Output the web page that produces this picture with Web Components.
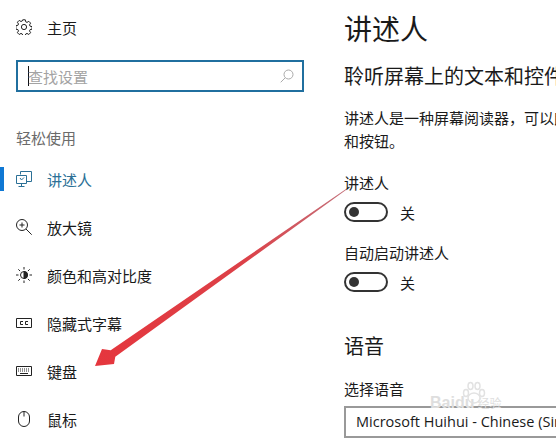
<!DOCTYPE html>
<html lang="zh">
<head>
<meta charset="utf-8">
<title>讲述人</title>
<style>
  html, body { margin: 0; height: 100%; background: #fff; overflow: hidden; }
  body { font-family: "Noto Sans CJK SC", "Liberation Sans", sans-serif; color: #1a1a1a; }
</style>
</head>
<body>
<settings-app>
  <nav-pane slot="nav">
    <nav-item slot="home" home>
      <svg slot="icon" viewBox="0 0 16 16" width="16" height="16" fill="none" stroke="#222" stroke-width="1"><circle cx="8" cy="8" r="2.6"/><path d="M6.700 .8h2.600l.4 2 1.300.6 1.800-1.100 1.800 1.800-1.100 1.800.6 1.300 2 .4v2.600l-2 .4-.6 1.300 1.100 1.800-1.800 1.800-1.800-1.100-1.300.6-.4 2H6.700l-.4-2-1.300-.6-1.800 1.100-1.800-1.800 1.100-1.800-.6-1.300-2-.4V6.700l2-.4.6-1.300-1.100-1.800 1.800-1.800 1.800 1.100 1.300-.6z"/></svg>
      主页
    </nav-item>
    <search-box slot="search" placeholder="查找设置"></search-box>
    <span slot="group">轻松使用</span>
    <nav-item active>
      <svg slot="icon" viewBox="0 0 16 16" width="16" height="16" fill="none" stroke="#2b7096" stroke-width="1"><path d="M4.500 3.500V.5h11v10h-5"/><path d="M.5 4.500h10v8H.5z"/><path d="M5.500 12.500v3M2.500 15.500h6"/><path d="M4 7l1.500 2L8 6.500"/></svg>
      讲述人
    </nav-item>
    <nav-item>
      <svg slot="icon" viewBox="0 0 16 16" width="16" height="16" fill="none" stroke="#222" stroke-width="1"><circle cx="6" cy="6" r="5.500"/><path d="M10 10l5.700 5.700M3.500 6h5M6 3.500v5"/></svg>
      放大镜
    </nav-item>
    <nav-item>
      <svg slot="icon" viewBox="0 0 16 16" width="16" height="16" fill="none" stroke="#222" stroke-width="1"><circle cx="8" cy="8" r="3.500"/><path d="M8 4.500a3.500 3.500 0 0 1 0 7z" fill="#222"/><path d="M8 0v2.500M8 13.500V16M0 8h2.500M13.500 8H16M2.300 2.300l1.800 1.800M11.900 11.900l1.800 1.800M2.300 13.700l1.800-1.800M11.900 4.100l1.800-1.800"/></svg>
      颜色和高对比度
    </nav-item>
    <nav-item>
      <svg slot="icon" viewBox="0 0 16 16" width="16" height="16" fill="none" stroke="#222" stroke-width="1"><path d="M.5 3.500h15v9H.5z"/><path d="M7 6.500H4.500v3H7M12 6.500H9.500v3H12"/></svg>
      隐藏式字幕
    </nav-item>
    <nav-item>
      <svg slot="icon" viewBox="0 0 16 16" width="16" height="16" fill="none" stroke="#222" stroke-width="1"><path d="M.5 3.500h15v9H.5z"/><path d="M2 6h12M2 8h12" stroke-dasharray="1 1"/><path d="M4 10.500h8"/></svg>
      键盘
    </nav-item>
    <nav-item>
      <svg slot="icon" viewBox="0 0 16 16" width="16" height="16" fill="none" stroke="#222" stroke-width="1"><rect x="2.500" y=".5" width="11" height="15" rx="5.500"/><path d="M8 .5v5"/></svg>
      鼠标
    </nav-item>
  </nav-pane>

  <narrator-page slot="main"></narrator-page>

  <arrow-mark slot="overlay"></arrow-mark>
  <water-mark slot="overlay"></water-mark>
</settings-app>

<script>
/**
 * Outer frame: the navigation column, the page and what lies over them.
 */
customElements.define('settings-app',
  class extends HTMLElement {
    constructor () {
      super()
      this.attachShadow({ mode: 'open' }).innerHTML = `
        <style>
          :host { display: grid; grid-template-columns: 344px 1fr; width: 556px; height: 441px; position: relative; overflow: hidden; }
        </style>
        <slot name="nav"></slot>
        <slot name="main"></slot>
        <slot name="overlay"></slot>
      `
    }
  }
)

/**
 * Left column.
 */
customElements.define('nav-pane',
  class extends HTMLElement {
    constructor () {
      super()
      this.attachShadow({ mode: 'open' }).innerHTML = `
        <style>
          :host { display: block; }
          #group { display: block; height: 20px; line-height: 20px; margin: 36px 0 0 16px; font-size: 15px; color: #6b6b6b; }
          #list { display: block; margin-top: 7px; }
          .search { display: block; margin: 8px 0 0 16px; }
        </style>
        <slot name="home"></slot>
        <div class="search"><slot name="search"></slot></div>
        <div id="group"><slot name="group"></slot></div>
        <div id="list"><slot></slot></div>
      `
    }
  }
)

/**
 * One row of the navigation, icon by way of a slot.
 */
customElements.define('nav-item',
  class extends HTMLElement {
    constructor () {
      super()
      this.attachShadow({ mode: 'open' }).innerHTML = `
        <style>
          :host { display: flex; align-items: center; height: 48px; position: relative; font-size: 15px; color: #1a1a1a; padding-left: 16px; }
          :host([home]) { height: 52px; padding-top: 2px; box-sizing: border-box; }
          :host([active]) { color: #2b7096; }
          :host([active])::before { content: ""; position: absolute; left: 0; top: 12px; width: 4px; height: 24px; background: #0f78d4; }
          .icon { display: flex; width: 16px; height: 16px; margin-right: 15px; }
        </style>
        <span class="icon"><slot name="icon"></slot></span>
        <slot></slot>
      `
    }
  }
)

/**
 * Search field with focus border and caret.
 */
customElements.define('search-box',
  class extends HTMLElement {
    constructor () {
      super()
      this.attachShadow({ mode: 'open' }).innerHTML = `
        <style>
          :host { display: flex; align-items: center; box-sizing: border-box; width: 288px; height: 32px; border: 2px solid #206f9f; padding: 0 8px 0 10px; font-size: 15px; color: #a3a3a3; }
          #caret { width: 1px; height: 20px; background: #111; margin-right: -1px; }
          #text { flex: 1; }
        </style>
        <span id="caret"></span>
        <span id="text"></span>
        <svg viewBox="0 0 14 14" width="14" height="14" fill="none" stroke="#aaa" stroke-width="1"><circle cx="8.500" cy="5.500" r="4.500"/><path d="M5.200 8.800L.7 13.300"/></svg>
      `
      this.shadowRoot.getElementById('text').textContent = this.getAttribute('placeholder')
    }
  }
)

/**
 * Switch with its caption.
 */
customElements.define('toggle-row',
  class extends HTMLElement {
    constructor () {
      super()
      this.attachShadow({ mode: 'open' }).innerHTML = `
        <style>
          :host { display: block; font-size: 15px; }
          #label { display: block; height: 20px; line-height: 20px; }
          #row { display: flex; align-items: center; height: 20px; margin-top: 9px; gap: 12px; }
          #track { display: flex; align-items: center; box-sizing: border-box; width: 44px; height: 20px; border: 2px solid #333; border-radius: 10px; padding-left: 3px; }
          #knob { width: 10px; height: 10px; border-radius: 50%; background: #333; }
        </style>
        <span id="label"><slot></slot></span>
        <div id="row"><span id="track"><span id="knob"></span></span><span>关</span></div>
      `
    }
  }
)

/**
 * Right column.
 */
customElements.define('narrator-page',
  class extends HTMLElement {
    constructor () {
      super()
      this.attachShadow({ mode: 'open' }).innerHTML = `
        <style>
          :host { display: block; white-space: nowrap; overflow: hidden; }
          h1 { font-size: 28px; font-weight: 400; line-height: 40px; margin: 8px 0 0; }
          h2 { font-size: 20px; font-weight: 400; line-height: 28px; margin: 14px 0 0; }
          p { font-size: 15px; line-height: 23px; margin: 16px 0 0; }
          toggle-row { margin-top: 21px; }
          .lang { margin-top: 40px; }
          label { display: block; font-size: 15px; line-height: 20px; margin-top: 19px; }
          #select { box-sizing: border-box; width: 240px; height: 32px; margin-top: 7px; border: 2px solid #999; padding-left: 10px; font: 14.5px/28px "Open Sans", "Noto Sans", sans-serif; overflow: hidden; }
        </style>
        <h1>讲述人</h1>
        <h2>聆听屏幕上的文本和控件</h2>
        <p>讲述人是一种屏幕阅读器，可以朗读屏幕上的所有元素，如文本<br>和按钮。</p>
        <toggle-row>讲述人</toggle-row>
        <toggle-row>自动启动讲述人</toggle-row>
        <h2 class="lang">语音</h2>
        <label>选择语音</label>
        <div id="select">Microsoft Huihui - Chinese (Simplified)</div>
      `
    }
  }
)

/**
 * The red arrow drawn over the screenshot.
 */
customElements.define('arrow-mark',
  class extends HTMLElement {
    constructor () {
      super()
      this.attachShadow({ mode: 'open' }).innerHTML = `
        <style>
          :host { position: absolute; left: 0; top: 0; pointer-events: none; }
          svg { display: block; }
        </style>
        <svg width="556" height="441" viewBox="0 0 556 441">
          <defs>
            <linearGradient id="fade" gradientUnits="userSpaceOnUse" x1="95" y1="366" x2="346" y2="189">
              <stop offset="0" stop-color="#e5363d"/>
              <stop offset=".6" stop-color="#dc4148"/>
              <stop offset="1" stop-color="#c4707a"/>
            </linearGradient>
          </defs>
          <path d="M346 189 L110.700 350.200 L102 349 L95 366 L114 364 L115.300 356.800 L346 190 Z" fill="url(#fade)"/>
        </svg>
      `
    }
  }
)

/**
 * Faint watermark in the lower right corner.
 */
customElements.define('water-mark',
  class extends HTMLElement {
    constructor () {
      super()
      this.attachShadow({ mode: 'open' }).innerHTML = `
        <style>
          :host { position: absolute; left: 430px; top: 394px; color: #dedede; font: 700 16px/18px "Liberation Sans", "Noto Sans CJK SC", sans-serif; pointer-events: none; white-space: nowrap; }
          svg { position: absolute; left: 31px; top: -13px; }
          small { font-size: 12px; font-weight: 400; margin-left: 3px; }
        </style>
        <svg width="26" height="24" viewBox="0 0 26 24" fill="none" stroke="#e2e2e2" stroke-width="1.500"><ellipse cx="13" cy="17" rx="6" ry="5"/><ellipse cx="5" cy="12" rx="2.500" ry="3.500"/><ellipse cx="9.500" cy="5" rx="2.500" ry="3.500"/><ellipse cx="16.500" cy="5" rx="2.500" ry="3.500"/><ellipse cx="21" cy="12" rx="2.500" ry="3.500"/></svg>
        Baidu<small>经验</small>
      `
    }
  }
)
</script>
</body>
</html>
